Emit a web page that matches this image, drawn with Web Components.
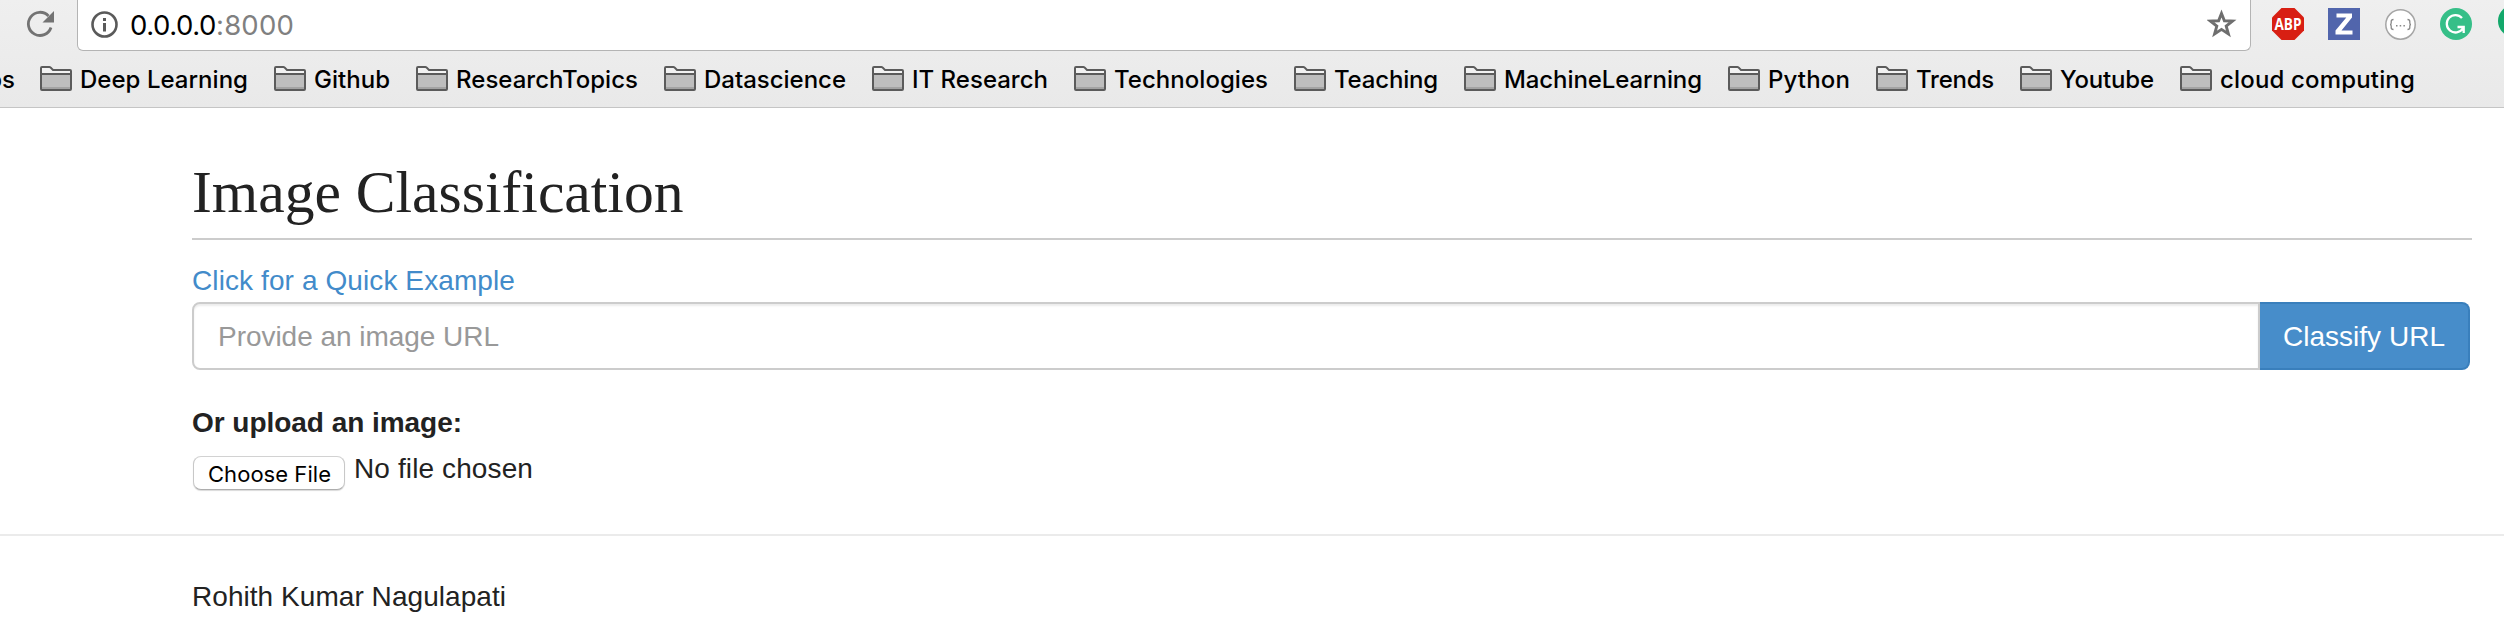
<!DOCTYPE html>
<html lang="en"><head><meta charset="utf-8"><title>Image Classification</title>
<style>html,body{margin:0;background:#fff;overflow:hidden}body{height:630px}</style></head>
<body><app-window></app-window>
<script>
const define=(name,html,ready)=>customElements.define(name,class extends HTMLElement{
  connectedCallback(){
    if(this.shadowRoot)return;
    const t=document.createElement('template');t.innerHTML=html;
    this.attachShadow({mode:'open'}).append(t.content.cloneNode(true));
    if(ready)ready(this,this.shadowRoot);
  }
});

/* A single text line tracked to fill the width given in its "w" attribute. */
define('fit-text',`<style>:host{display:block;flex:none;white-space:nowrap}span{display:inline-block;white-space:nowrap}</style><span><slot></slot></span>`,(el,root)=>{
  const w=+el.getAttribute('w'),s=root.querySelector('span');
  const n=el.textContent.length;
  el.style.width=w+'px';
  const natural=s.getBoundingClientRect().width;
  if(natural)s.style.letterSpacing=((w-natural)/n)+'px';
});

define('folder-icon',`<style>:host{display:block;width:32px;height:25px;flex:none}svg{display:block}</style>
<svg width="32" height="25" viewBox="0 0 32 25"><path d="M1 23V2Q1 1 2 1H9.5Q10.5 1 11 2L13 4H30Q31 4 31 5V23Q31 24 30 24H2Q1 24 1 23Z" fill="#f2f2f2"/><path d="M1 8H31V23H1Z" fill="#bebebe"/><path d="M2 21H30V23H2Z" fill="#a3a3a3"/><path d="M1 8H31M1 23V2Q1 1 2 1H9.5Q10.5 1 11 2L13 4H30Q31 4 31 5V23Q31 24 30 24H2Q1 24 1 23Z" fill="none" stroke="#5b5b5b" stroke-width="2"/></svg>`);

define('bookmark-item',`<style>:host{display:flex;align-items:flex-start;flex:none;font:450 24px/30px Inter,sans-serif;color:#000}folder-icon{margin-right:8px}fit-text{margin-top:-1px}</style><folder-icon></folder-icon>`,(el,root)=>{
  const f=document.createElement('fit-text');f.setAttribute('w',el.getAttribute('w'));f.textContent=el.getAttribute('label');root.append(f);
});

define('bookmark-bar',`<style>:host{display:flex;height:41px;padding-top:15px;overflow:hidden;box-sizing:content-box}
.cut{font:450 24px/30px Inter,sans-serif;color:#000;width:15px;margin:-1px 25px 0 0;display:flex;justify-content:flex-end;flex:none}
bookmark-item{margin-right:26px}</style><span class="cut">ps</span>`,(el,root)=>{
  for(const [label,w] of [['Deep Learning',168],['Github',76],['ResearchTopics',182],['Datascience',142],['IT Research',136],['Technologies',154],['Teaching',104],['MachineLearning',198],['Python',82],['Trends',78],['Youtube',94],['cloud computing',195]]){
    const b=document.createElement('bookmark-item');b.setAttribute('label',label);b.setAttribute('w',w);root.append(b);
  }
});

define('omni-box',`<style>:host{display:flex;box-sizing:border-box;width:2174px;height:51px;margin-left:77px;border:1px solid #b4b4b4;border-top:0;border-radius:0 0 6px 6px;background:#fff;padding:0 13px;font:27.5px/30px Inter,sans-serif;color:#000;flex:none}
.info{margin:11px 12px 0 0;width:27px;height:27px}.a,.b{margin-top:10px}.b{color:#808080}.star{margin:9px 0 0 auto}svg{flex:none;display:block}</style>
<svg class="info" viewBox="0 0 27 27"><circle cx="13.5" cy="13.5" r="12" fill="none" stroke="#5a5a5a" stroke-width="2.6"/><path d="M12 7h3v3h-3zM12 12h3v8.5h-3z" fill="#5a5a5a"/></svg>
<fit-text class="a" w="86">0.0.0.0</fit-text><fit-text class="b" w="78">:8000</fit-text>
<svg class="star" width="30" height="30" viewBox="0 0 30 30"><path d="M14.500 4.500 17.400 11.800 25.500 12.100 19.200 17.100 21.400 25 14.500 20.400 7.600 25 9.800 17.100 3.500 12.100 11.600 11.800Z" fill="none" stroke="#6e6e6e" stroke-width="2.900"/></svg>`);

define('extension-icons',`<style>:host{display:flex;align-items:flex-start;flex:none;padding:8px 0 0 21px;gap:24px}svg{display:block;flex:none;width:32px;height:32px;overflow:visible;font-family:"Open Sans",sans-serif}.edge{margin-top:-8px}</style>
<svg viewBox="0 0 32 32"><path d="M9.500 0h13L32 9.500v13L22.500 32h-13L0 22.500v-13Z" fill="#d81f13"/><text x="2.500" y="21.500" font-size="15.500" font-weight="700" fill="#fff" textLength="27" lengthAdjust="spacingAndGlyphs">ABP</text></svg>
<svg viewBox="0 0 32 32"><path d="M0 0h32v32H0z" fill="#5165ac"/><path d="M8.500 5.500h15.500v4L13.500 22.500H24.500v4H7.500v-4L18.300 9.500H8.500Z" fill="#fff"/></svg>
<svg viewBox="0 0 32 32"><circle cx="16.500" cy="16.500" r="14.700" fill="#fff" stroke="#a5a5a5" stroke-width="1.500"/><path d="M9.500 11.500q-2.300 0-2.300 2v1.500q0 1.500-1.200 1.500 1.200 0 1.200 1.500v1.500q0 2 2.300 2M23.500 11.500q2.300 0 2.300 2v1.500q0 1.500 1.200 1.500-1.200 0-1.200 1.500v1.500q0 2-2.300 2" fill="none" stroke="#888" stroke-width="1.300"/><path d="M12 17h1.500v1.500H12zM15.700 17h1.500v1.500h-1.500zM19.400 17h1.500v1.500h-1.500z" fill="#888"/></svg>
<svg viewBox="0 0 32 32"><circle cx="16" cy="16" r="16" fill="#36bf88"/><path d="M22 10A8.700 8.700 0 1 0 22.800 20.500M17.500 19H23.700V25" fill="none" stroke="#fff" stroke-width="2.300"/></svg>
<svg class="edge" viewBox="0 0 32 32"><circle cx="18" cy="21" r="16" fill="#13a86b"/></svg>`);

define('browser-chrome',`<style>:host{display:block;box-sizing:border-box;height:108px;border-bottom:1px solid #c5c5c5;background:linear-gradient(#efefef,#e9e9e9);overflow:hidden}.top{display:flex;height:51px;position:relative}.reload{display:block;position:absolute;left:24px;top:10px}</style>
<div class="top"><svg class="reload" width="32" height="30" viewBox="0 0 32 30"><path d="M24.500 6A11.600 11.600 0 1 0 27 17.500" fill="none" stroke="#737373" stroke-width="2.800"/><path d="M30 1v11.500H18.500Z" fill="#737373"/></svg><omni-box></omni-box><extension-icons></extension-icons></div><bookmark-bar></bookmark-bar>`);

define('url-form',`<style>:host{display:flex;height:68px;width:2278px;font:28px/40px "Liberation Sans",sans-serif}
.field{flex:1;box-sizing:border-box;border:2px solid #ccc;border-radius:8px 0 0 8px;box-shadow:inset 0 2px 2px rgba(0,0,0,.075);padding:13px 24px 11px;color:#999}
.btn{width:210px;box-sizing:border-box;background:#478dca;border:2px solid #397fbc;border-left:0;border-radius:0 8px 8px 0;padding:13px 24px 11px 23px;color:#fff}</style>
<div class="field"><fit-text w="281">Provide an image URL</fit-text></div><div class="btn" role="button"><fit-text w="162">Classify URL</fit-text></div>`);

define('file-picker',`<style>:host{display:flex;align-items:flex-start;height:41px}.btn{box-sizing:border-box;width:152px;height:34px;margin:6px 0 0 1px;border:1px solid #c8c8c8;border-color:#d2d2d2 #c8c8c8 #adadad;border-radius:8px;box-shadow:0 1px 1px rgba(0,0,0,.15);padding:2px 0 0 14px;font:22px/30px Inter,sans-serif;color:#000;background:#fff}.none{font:28px/40px "Liberation Sans",sans-serif;margin:-1px 0 0 9px}</style>
<div class="btn" role="button"><fit-text w="123">Choose File</fit-text></div><fit-text class="none" w="179">No file chosen</fit-text>`);

define('classify-page',`<style>:host{display:block;color:#222;font:28px/40px "Liberation Sans",sans-serif}
main{box-sizing:border-box;height:426px;padding:50px 0 0 192px}
h1{margin:0;box-sizing:border-box;width:2280px;height:82px;border-bottom:2px solid #ccc;font:400 59.600px/68px "Liberation Serif",serif}
a{display:block;color:#428bca;margin:21px 0 1px;height:40px}.label{font-weight:700;margin:33px 0 7px;height:40px}
footer{border-top:2px solid #ebebeb;padding:41px 0 0 192px}</style>
<main><h1>Image Classification</h1><a><fit-text w="323">Click for a Quick Example</fit-text></a><url-form></url-form><div class="label"><fit-text w="270">Or upload an image:</fit-text></div><file-picker></file-picker></main>
<footer><fit-text w="314">Rohith Kumar Nagulapati</fit-text></footer>`);

define('app-window',`<style>:host{display:block;width:2504px;height:630px;overflow:hidden}</style><browser-chrome></browser-chrome><classify-page></classify-page>`);
</script></body></html>
